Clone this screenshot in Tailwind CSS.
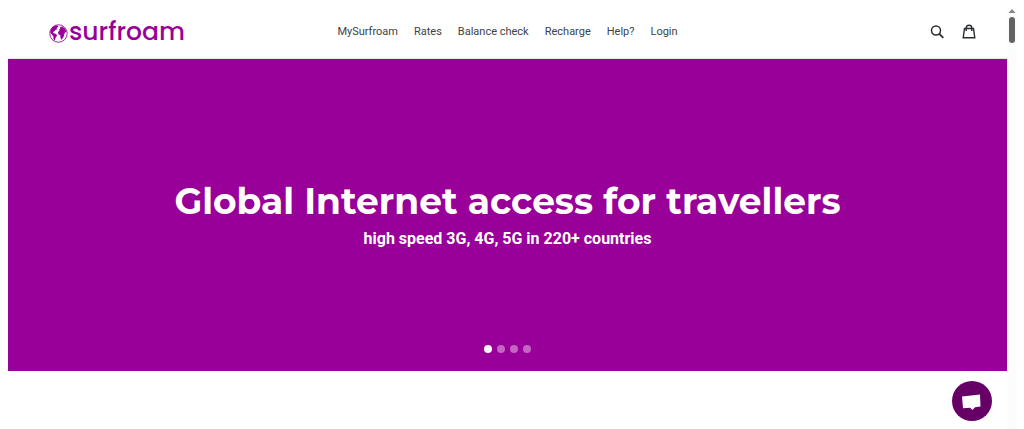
<!DOCTYPE html>
<html lang="en">
<head>
  <meta charset="UTF-8" />
  <meta name="viewport" content="width=device-width, initial-scale=1.0" />
  <title>Surfroam - Global Internet access for travellers</title>
  <script src="https://cdn.jsdelivr.net/npm/@tailwindcss/browser@4"></script>
</head>
<body class="bg-white font-['Roboto',sans-serif] flex min-h-screen overflow-hidden">

  <div class="flex-1 pl-2">

    <!-- Header -->
    <header class="h-[59px] grid grid-cols-[1fr_auto_1fr] items-center px-[30px] pt-1.5 border-b border-gray-200">
      <a href="#" class="flex items-center gap-px pl-[11px] text-[#990099]">
        <svg class="size-[19px] mt-0.5" viewBox="0 0 20 20" aria-hidden="true">
          <circle cx="10" cy="10" r="9.200" fill="white" stroke="currentColor" stroke-width=".9" />
          <path fill="currentColor" d="M1.500 7 3.500 3.500 7 1.500 10 1.800 9.500 3.500 8 4 8.500 5.500 6.500 6.500 5.500 8 4 8.500 5 9.800 7.500 10.500 8.500 12 7 14.500 6 17.500 4.800 16 4.500 13 3 11 1.500 9.500Z" />
          <path fill="currentColor" d="M11.500 3.500 14 2.500 17 5 18.500 8.500 17.500 9 16.500 8 17 10.500 15.500 10 16 12 14.500 15 13 16.500 12 14 11.800 11.500 10 11 9.500 8.500 11 7 10.800 5.500 12 4.800Z" />
        </svg>
        <span class="text-[25px] leading-8 font-medium font-['Poppins',sans-serif]">surfroam</span>
      </a>
      <nav class="flex gap-4 text-[11px] leading-4 text-[#3d4246]">
        <a href="#">MySurfroam</a>
        <a href="#">Rates</a>
        <a href="#">Balance check</a>
        <a href="#">Recharge</a>
        <a href="#">Help?</a>
        <a href="#">Login</a>
      </nav>
      <div class="flex justify-end gap-4 text-[#2b2e31]">
        <button type="button" aria-label="Search">
          <svg class="size-4" viewBox="0 0 16 16" fill="none" stroke="currentColor" stroke-width="1.500">
            <circle cx="7" cy="6.500" r="4.500" />
            <path d="m10.300 9.800 4 4" stroke-width="1.800" />
          </svg>
        </button>
        <a href="#" aria-label="Cart">
          <svg class="size-4" viewBox="0 0 16 16" fill="none" stroke="currentColor" stroke-width="1.400">
            <path d="M3.500 4.500h9l1.300 9.300H2.200Z" />
            <path d="M5.200 7V4a2.800 2.800 0 0 1 5.600 0v3" />
          </svg>
        </a>
      </div>
    </header>

    <!-- Slideshow -->
    <section class="relative h-[312px] pb-0.5 bg-[#990099] text-white text-center flex flex-col items-center justify-center">
      <h1 class="text-4xl leading-12 font-bold font-['Montserrat',sans-serif]">Global Internet access for travellers</h1>
      <p class="text-base leading-6 font-bold mt-0.5">high speed 3G, 4G, 5G in 220+ countries</p>
      <div class="absolute inset-x-0 bottom-[18px] flex justify-center gap-[5px]">
        <button type="button" aria-label="Slide 1" class="size-2 rounded-full bg-white"></button>
        <button type="button" aria-label="Slide 2" class="size-2 rounded-full bg-white/40"></button>
        <button type="button" aria-label="Slide 3" class="size-2 rounded-full bg-white/40"></button>
        <button type="button" aria-label="Slide 4" class="size-2 rounded-full bg-white/40"></button>
      </div>
    </section>
  </div>

  <!-- Scrollbar -->
  <div class="w-[17px] shrink-0 pr-[7px] pt-2">
    <div class="bg-[#fcfcfc] h-full flex flex-col items-center gap-1">
      <svg class="w-2 h-[5px]" viewBox="0 0 8 5" aria-hidden="true"><path d="M4 1 7.500 5H.5Z" fill="#858585" /></svg>
      <div class="w-1.5 h-[26px] rounded-full bg-[#636363]"></div>
    </div>
  </div>

  <!-- Chat -->
  <button type="button" aria-label="Chat" class="fixed right-8 bottom-2 size-10 rounded-full bg-[#660066] flex items-center justify-center">
    <svg class="size-10" viewBox="0 0 40 40" aria-hidden="true">
      <path fill="white" d="M10 15.500 28 13.500l.500 12-5.500.700L20.500 29 18 26.700l-7 .500Z" />
    </svg>
  </button>

</body>
</html>
